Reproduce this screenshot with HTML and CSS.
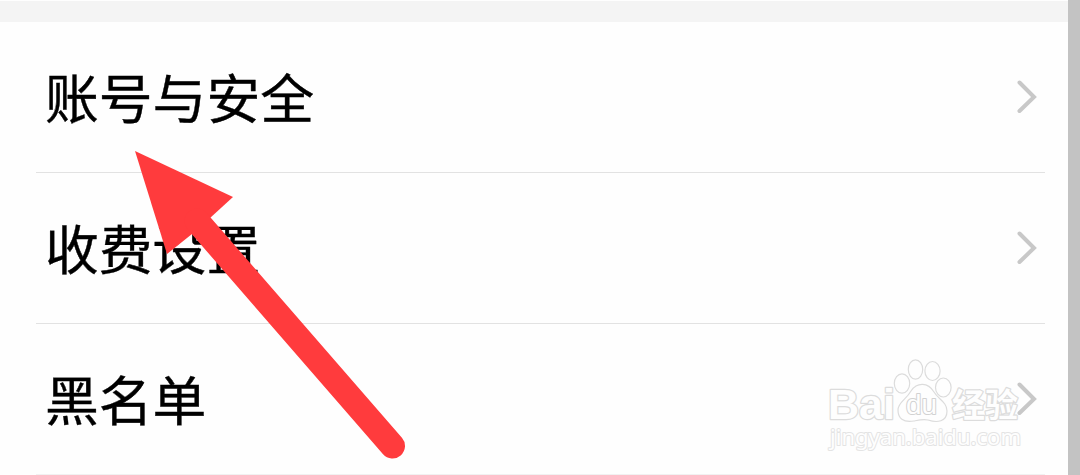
FILE: index.html
```
<!DOCTYPE html>
<html lang="zh-CN">
<head>
    <meta charset="UTF-8">
    <meta name="viewport" content="width=device-width, initial-scale=1.0">
    <title>设置</title>
    <link rel="stylesheet" href="styles.css">
</head>
<body>
    <div class="screen">
        <div class="content">
            <div class="divider"></div>
            <ul class="settings">
                <li class="item">
                    <span class="label">账号与安全</span>
                    <svg class="chevron" viewBox="0 0 20 34"><path d="M2.5 2.5 L17 17 L2.5 31"/></svg>
                </li>
                <li class="item">
                    <span class="label">收费设置</span>
                    <svg class="chevron" viewBox="0 0 20 34"><path d="M2.5 2.5 L17 17 L2.5 31"/></svg>
                </li>
                <li class="item">
                    <span class="label">黑名单</span>
                    <svg class="chevron" viewBox="0 0 20 34"><path d="M2.5 2.5 L17 17 L2.5 31"/></svg>
                </li>
            </ul>
        </div>
        <div class="edge"></div>

        <svg class="watermark" viewBox="0 0 210 110">
            <text class="brand" x="8" y="69" textLength="67" lengthAdjust="spacingAndGlyphs">Bai</text>
            <g class="paw">
                <ellipse cx="82" cy="33.5" rx="7.7" ry="9.7"/>
                <ellipse cx="95.5" cy="19.5" rx="7.2" ry="9.7"/>
                <ellipse cx="112.5" cy="21" rx="7.6" ry="9.5"/>
                <ellipse cx="123.3" cy="37.5" rx="7.8" ry="9.5"/>
                <path d="M91 41 C97 32 108 32 114 42 C118 49 127 52 127 61 C127 72 117 73 108 70 C103 69 99 70 94 71 C83 73 78 68 78 60 C78 52 86 50 91 41 Z"/>
            </g>
            <text class="du" x="86" y="64" textLength="31" lengthAdjust="spacingAndGlyphs">du</text>
            <text class="exp" x="132" y="67" textLength="66" lengthAdjust="spacingAndGlyphs">经验</text>
            <text class="site" x="10" y="95" textLength="191" lengthAdjust="spacingAndGlyphs">jingyan.baidu.com</text>
        </svg>

        <svg class="arrow" viewBox="0 0 272 310">
            <path class="head" d="M0 0 L98 46 L75 67 L57 83 L32 103 Z"/>
            <path class="shaft" d="M62 70 L257.5 295"/>
        </svg>
    </div>
</body>
</html>
```
FILE: styles.css
```
body {
    margin: 0;
    background-color: #fefefe;
    color: #000;
    font-family: "Noto Sans CJK SC", sans-serif;
}

.screen {
    position: relative;
    display: flex;
    height: 475px;
    overflow: hidden;
}

.content {
    flex: 1;
}

.divider {
    height: 21px;
    margin-top: 1px;
    background-color: #f4f4f4;
}

.settings {
    margin: 0;
    padding: 0 23px 0 36px;
    list-style: none;
}

.item {
    display: flex;
    align-items: center;
    justify-content: space-between;
    box-sizing: border-box;
    height: 151px;
    padding: 0 8px 0 9px;
    border-bottom: 1px solid #e2e2e2;
}

.item:last-child {
    border-bottom-color: #f1f1f1;
}

.label {
    padding-bottom: 2px;
    font-size: 53.8px;
    line-height: 80px;
    -webkit-text-stroke: 0.4px #000;
}

.chevron {
    width: 20px;
    height: 34px;
    fill: none;
    stroke: #c8c8c8;
    stroke-width: 4;
    stroke-linecap: round;
}

.edge {
    width: 12px;
    background-color: #c3c3c3;
}

.watermark {
    position: absolute;
    left: 820px;
    top: 350px;
    width: 210px;
    height: 110px;
    overflow: visible;
    fill: #fefefe;
    stroke: #dcdcdc;
    stroke-width: 1.2;
}

.watermark text {
    paint-order: stroke;
    stroke-linejoin: round;
}

.brand {
    font: bold 43px "Liberation Sans", sans-serif;
    stroke-width: 2.5;
}

.watermark .du {
    font: 27px "Liberation Sans", sans-serif;
    stroke: #d2d2d2;
    stroke-width: 2;
}

.exp {
    font: bold 33px "Noto Sans CJK SC", sans-serif;
    stroke-width: 2.5;
}

.site {
    font: 22px "Noto Sans", sans-serif;
    stroke: #e4e4e4;
    stroke-width: 2;
}

.arrow {
    position: absolute;
    left: 135px;
    top: 151px;
    width: 272px;
    height: 310px;
}

.head {
    fill: #ff3b3d;
}

.shaft {
    fill: none;
    stroke: #ff3b3d;
    stroke-width: 25;
    stroke-linecap: round;
}
```
